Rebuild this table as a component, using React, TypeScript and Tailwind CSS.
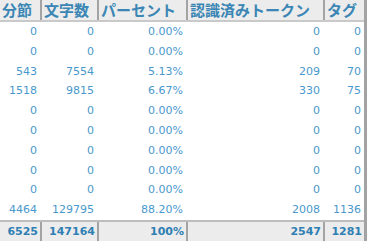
const rows = [
  ["0", "0", "0.00%", "0", "0"],
  ["0", "0", "0.00%", "0", "0"],
  ["543", "7554", "5.13%", "209", "70"],
  ["1518", "9815", "6.67%", "330", "75"],
  ["0", "0", "0.00%", "0", "0"],
  ["0", "0", "0.00%", "0", "0"],
  ["0", "0", "0.00%", "0", "0"],
  ["0", "0", "0.00%", "0", "0"],
  ["0", "0", "0.00%", "0", "0"],
  ["4464", "129795", "88.20%", "2008", "1136"],
];

const headers = ["分節", "文字数", "パーセント", "認識済みトークン", "タグ"];
const totals = ["6525", "147164", "100%", "2547", "1281"];

const cols = "grid grid-cols-[42px_57px_89px_137px_39px]";

export default function App() {
  return (
    <div className="w-[367px] h-[241px] bg-white border-r-[3px] border-[#a3a3a3] overflow-hidden font-['DejaVu_Sans',sans-serif]">
      <div className={`${cols} h-[22px] bg-[#ececec] border-b-2 border-[#c9c9c9]`}>
        {headers.map((h, i) => (
          <div
            key={h}
            className={`pl-[2px] text-[15px] leading-[20px] font-bold text-[#3b86b4] whitespace-nowrap overflow-hidden font-['Noto_Sans_CJK_JP',sans-serif] ${
              i < 4 ? "border-r-2 border-[#a3a3a3]" : ""
            }`}
          >
            {h}
          </div>
        ))}
      </div>
      {rows.map((r, ri) => (
        <div key={ri} className={`${cols} h-[19.8px]`}>
          {r.map((v, i) => (
            <div
              key={i}
              className={`text-right pr-[3px] text-[11px] leading-[19.8px] text-[#4a98cc] ${
                i < 4 ? "mr-[2px]" : ""
              }`}
            >
              {v}
            </div>
          ))}
        </div>
      ))}
      <div className={`${cols} h-[21px] bg-[#ececec] border-t-2 border-[#bdbdbd]`}>
        {totals.map((v, i) => (
          <div
            key={i}
            className={`text-right pr-[2px] text-[11px] leading-[19px] font-bold text-[#2f7fb3] ${
              i < 4 ? "border-r-2 border-[#a3a3a3]" : ""
            }`}
          >
            {v}
          </div>
        ))}
      </div>
    </div>
  );
}
